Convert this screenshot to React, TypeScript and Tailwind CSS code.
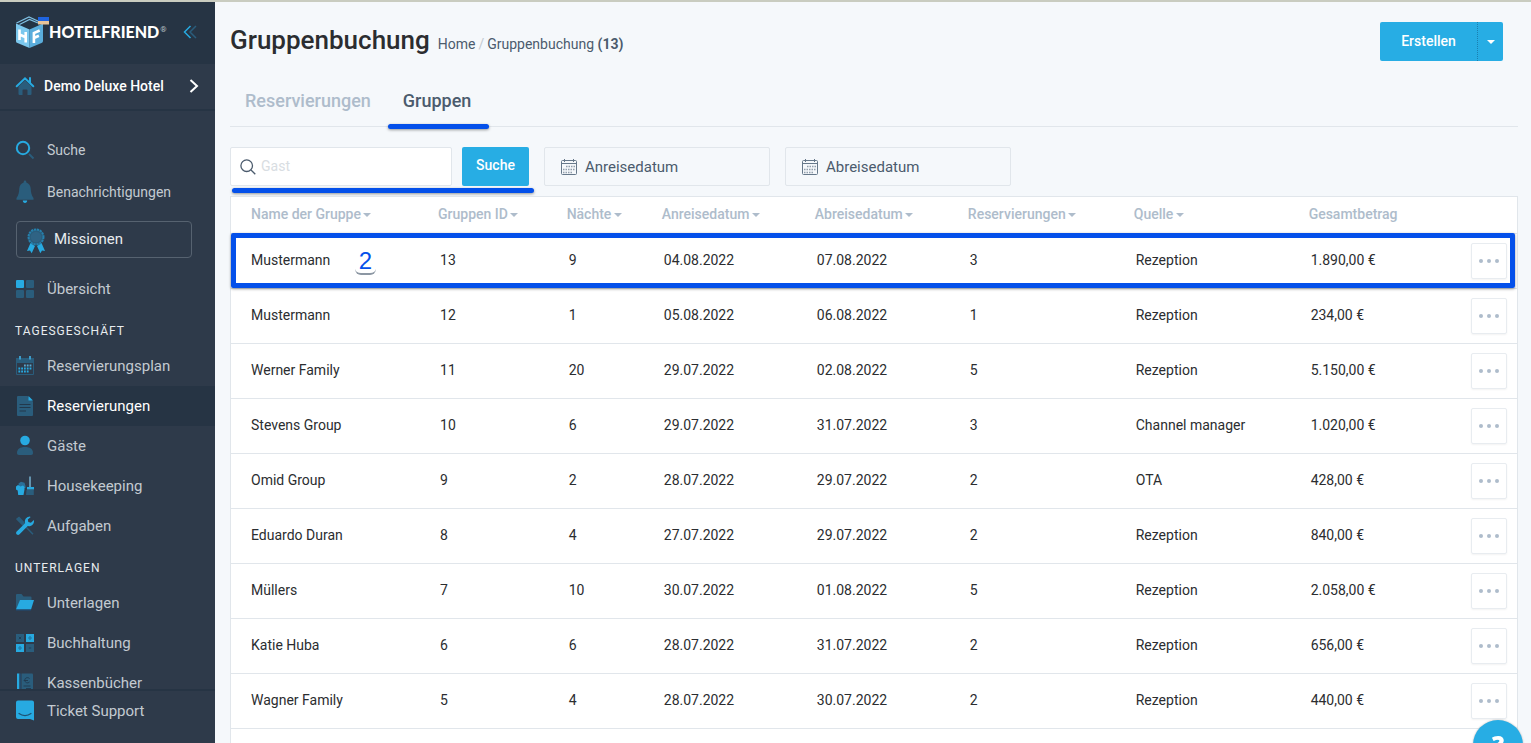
import React, { useState } from 'react'

interface IGroup {
  id: number
  name: string
  nights: number
  arrival: string
  departure: string
  reservations: number
  source: string
  total: string
}

const groups: IGroup[] = [
  { id: 13, name: 'Mustermann', nights: 9, arrival: '04.08.2022', departure: '07.08.2022', reservations: 3, source: 'Rezeption', total: '1.890,00 €' },
  { id: 12, name: 'Mustermann', nights: 1, arrival: '05.08.2022', departure: '06.08.2022', reservations: 1, source: 'Rezeption', total: '234,00 €' },
  { id: 11, name: 'Werner Family', nights: 20, arrival: '29.07.2022', departure: '02.08.2022', reservations: 5, source: 'Rezeption', total: '5.150,00 €' },
  { id: 10, name: 'Stevens Group', nights: 6, arrival: '29.07.2022', departure: '31.07.2022', reservations: 3, source: 'Channel manager', total: '1.020,00 €' },
  { id: 9, name: 'Omid Group', nights: 2, arrival: '28.07.2022', departure: '29.07.2022', reservations: 2, source: 'OTA', total: '428,00 €' },
  { id: 8, name: 'Eduardo Duran', nights: 4, arrival: '27.07.2022', departure: '29.07.2022', reservations: 2, source: 'Rezeption', total: '840,00 €' },
  { id: 7, name: 'Müllers', nights: 10, arrival: '30.07.2022', departure: '01.08.2022', reservations: 5, source: 'Rezeption', total: '2.058,00 €' },
  { id: 6, name: 'Katie Huba', nights: 6, arrival: '28.07.2022', departure: '31.07.2022', reservations: 2, source: 'Rezeption', total: '656,00 €' },
  { id: 5, name: 'Wagner Family', nights: 4, arrival: '28.07.2022', departure: '30.07.2022', reservations: 2, source: 'Rezeption', total: '440,00 €' },
]

const columns = [
  { title: 'Name der Gruppe', width: 'w-[14.7%]', sortable: true },
  { title: 'Gruppen ID', width: 'w-[10%]', sortable: true },
  { title: 'Nächte', width: 'w-[7.4%]', sortable: true },
  { title: 'Anreisedatum', width: 'w-[11.9%]', sortable: true },
  { title: 'Abreisedatum', width: 'w-[11.9%]', sortable: true },
  { title: 'Reservierungen', width: 'w-[12.9%]', sortable: true },
  { title: 'Quelle', width: 'w-[13.6%]', sortable: true },
  { title: 'Gesamtbetrag', width: 'w-[12.4%]', sortable: false },
]

const LIGHT = '#27aae1'
const DARK = '#2a5d7c'

const Icon = ({ children }: { children: React.ReactNode }) => (
  <svg viewBox="0 0 18 18" className="h-[18px] w-[18px] shrink-0 overflow-visible" aria-hidden="true">
    {children}
  </svg>
)

const HouseIcon = () => (
  <Icon>
    <path d="M2.500 9.500 9 3.500l6.500 6V17a1 1 0 0 1-1 1h-3v-4.500a1 1 0 0 0-1-1h-3a1 1 0 0 0-1 1V18h-3a1 1 0 0 1-1-1z" fill={DARK} />
    <path d="M.7 9.300 9 1.300l8.300 8M14 1v4.500" fill="none" stroke={LIGHT} strokeWidth="2" strokeLinecap="round" />
  </Icon>
)

const SearchIcon = () => (
  <Icon>
    <path d="m13 13 4.500 4.500" stroke={DARK} strokeWidth="2" />
    <circle cx="7" cy="7" r="6.200" fill="none" stroke={LIGHT} strokeWidth="2" />
  </Icon>
)

const BellIcon = () => (
  <Icon>
    <path d="M9-2.500c.8 0 1.300.6 1.300 1.500v.5C13 .4 14.500 2.500 14.700 5.500c.2 4.500.8 6.500 2.800 9.500v1.700H.5V15c2-3 2.600-5 2.800-9.500C3.500 2.500 5 .4 7.700-.5V-1c0-.9.5-1.500 1.300-1.500z" fill={DARK} />
    <path d="M6.800 17.500h4.400c0 1.500-.9 2.500-2.200 2.500s-2.200-1-2.200-2.500z" fill={LIGHT} />
  </Icon>
)

const AwardIcon = () => (
  <Icon>
    <path d="M3.500 12 0 20l3-.5 1.700 2.700L8 15zM14.500 12 18 20l-3-.5-1.700 2.700L10 15z" fill={LIGHT} />
    <circle cx="9" cy="6" r="7.500" fill={DARK} />
    <circle cx="9" cy="6" r="7.500" fill="none" stroke="#2680ad" strokeWidth="2" strokeDasharray="2.300 .7" />
    <circle cx="9" cy="6" r="5.300" fill="#2f6384" />
  </Icon>
)

const TilesIcon = () => (
  <Icon>
    <rect width="8" height="8" rx="1" fill={LIGHT} />
    <rect x="10" width="8" height="8" rx="1" fill={DARK} />
    <rect y="10" width="8" height="8" rx="1" fill={DARK} />
    <rect x="10" y="10" width="8" height="8" rx="1" fill={DARK} />
  </Icon>
)

const PlanIcon = () => (
  <Icon>
    <path d="M0 1h18v5H0z" fill={DARK} />
    <path d="M.5 6v11.500h17V6" fill="none" stroke={DARK} />
    <path d="M4-1v3.500M14-1v3.500" stroke="#3d9cc9" strokeWidth="2" />
    <path d="M8 8.500h8" stroke="#58a9d0" strokeWidth="1.800" strokeDasharray="1.800 1" />
    <path d="M2.400 11.500H16M2.400 14.500h11" stroke={LIGHT} strokeWidth="1.800" strokeDasharray="1.800 1" />
  </Icon>
)

const DocumentIcon = () => (
  <Icon>
    <path d="M2-1h9.500L17 4.500V18a1 1 0 0 1-1 1H2a1 1 0 0 1-1-1V0a1 1 0 0 1 1-1z" fill={DARK} />
    <path d="M12.500-1 17 3.500h-4.500z" fill={LIGHT} />
    <path d="M3.500 7.500h11M3.500 10.500h11M3.500 14h6.500" stroke="#22384b" strokeWidth="1.200" />
  </Icon>
)

const GuestIcon = () => (
  <Icon>
    <circle cx="9" cy="3.500" r="4.800" fill={LIGHT} />
    <path d="M1 16c0-4 3-6 8-6s8 2 8 6c0 1.300-.7 2-2 2H3c-1.300 0-2-.7-2-2z" fill={DARK} />
  </Icon>
)

const HousekeepingIcon = () => (
  <Icon>
    <path d="M13-.5h2V10h-2z" fill="#6393ae" />
    <path d="M11 10h7v2.500h-7z" fill={LIGHT} />
    <path d="M10.500 13h7.300v5H10z" fill={DARK} />
    <path d="M2.500 6.500 5 4.700l3.500 1L9.500 9v2H3z" fill="#2a6f98" />
    <path d="M0 9.500 2 8l2.500 1.500L7 8.500l1.500 1.500v2.500L7.500 18H2.200l-.5-4.500L0 12.500z" fill={LIGHT} />
  </Icon>
)

const ToolsIcon = () => (
  <Icon>
    <path d="m1 2 2-1.500L9 7 7.500 8.700zM10.500 10.500l6.500 6.700" stroke={DARK} strokeWidth="1.500" fill={DARK} />
    <path d="M13.500-.5a5 5 0 0 0-4.400 6.700L.7 14.500c-1.800 2 .8 4.600 2.800 2.800L11.800 9a5 5 0 0 0 6.100-6l-3 2.700-2.600-.6-.5-2.500L14.700 0z" fill={LIGHT} />
  </Icon>
)

const FolderIcon = () => (
  <Icon>
    <path d="M0 1a1 1 0 0 1 1-1h4.500l2 2.500h7a1 1 0 0 1 1 1V8L0 15z" fill={DARK} />
    <path d="M4 6h14l-3 9.500H0z" fill={LIGHT} />
    <path d="M0 16h15" stroke="#1d4d78" />
  </Icon>
)

const CalcIcon = () => (
  <Icon>
    <rect width="8" height="8" fill={DARK} />
    <rect x="10" width="8" height="8" fill={LIGHT} />
    <rect y="10" width="8" height="8" fill={LIGHT} />
    <rect x="10" y="10" width="8" height="8" fill={DARK} />
    <path d="m2.800 2.800 2.400 2.400m0-2.400L2.800 5.200M12.800 14h2.400" stroke="#1f3f58" />
    <path d="M12 4h4M14 2v4M2 14h4M4 12v4" stroke="#2277a3" strokeWidth="1.200" />
  </Icon>
)

const BookIcon = () => (
  <Icon>
    <path d="M5.500-.5H16a1 1 0 0 1 1 1V18H5.500z" fill={DARK} />
    <path d="M1-.5h2.500V18H1z" fill={LIGHT} />
    <path d="M3.500-.5H5V18H3.500z" fill="#22486a" />
    <path d="M13.500 4.500c-2.300-2-5-.2-4.700 2s2.700 3.200 4.700 1.500M7.700 6.500H12M7.500 12h7M10 14.500h5" fill="none" stroke="#213c53" />
  </Icon>
)

const SupportIcon = () => (
  <Icon>
    <path d="M2-1.500h14a2 2 0 0 1 2 2V18.500l-4-1.500H2a2 2 0 0 1-2-2V.5a2 2 0 0 1 2-2z" fill={LIGHT} />
    <path d="M3 11.500c3.500 2.700 8.500 2.700 12 0" fill="none" stroke="#1d5273" strokeWidth="1.200" strokeLinecap="round" />
  </Icon>
)

const CalendarIcon = () => (
  <svg viewBox="0 0 16 16" className="h-4 w-4 shrink-0" fill="none" stroke="#66788a" aria-hidden="true">
    <rect x=".5" y="1.500" width="15" height="14" rx="1" />
    <path d="M.5 4.500h15M3.500 0v3M12.500 0v3" />
    <path d="M5 7.500h9M2 10.500h12M2 13.500h9" strokeWidth="1.500" strokeDasharray="1.500 1" strokeOpacity=".7" />
  </svg>
)

const Logo = () => (
  <svg viewBox="0 0 34 33" className="h-[33px] w-[34px] shrink-0" aria-hidden="true">
    <path d="M1 8.500 13 3l14 5.500L14 14z" fill="#233344" />
    <path d="M.5 7 13 1l11 5M3.500 8.500 13.500 3.500 22 7" fill="none" stroke="#7fbfe2" strokeWidth="1.300" />
    <path d="m0 7.500 13.500 6V32L1.500 27A2 2 0 0 1 0 25z" fill="#7cc8ee" />
    <path d="m27 7.500-13.500 6V32l12-5a2 2 0 0 0 1.500-2z" fill="#5aaddc" />
    <path d="M3.500 13.500V24M9.700 16v10.500M3.500 18.500l6.200 2.700" stroke="#fff" strokeWidth="2.600" fill="none" />
    <path d="M17.900 27V17l5.800-2.500M17.900 22l5-2.200" stroke="#fff" strokeWidth="2.600" fill="none" />
    <path d="M22 1h11v4H22z" fill="#1f64e0" />
    <path d="M22 5h11v3.500H22z" fill="#e8c49a" />
  </svg>
)

const Caret = () => (
  <span className="inline-block border-x-4 border-t-4 border-x-transparent border-t-current align-middle" />
)

interface MenuItemProps {
  label: string
  icon: React.ReactNode
  active?: boolean
  small?: boolean
}

const MenuItem = ({ label, icon, active, small }: MenuItemProps) => (
  <a
    href="#"
    className={`flex h-10 shrink-0 items-center gap-[13px] px-4 hover:text-white ${small ? 'text-sm' : 'text-[15px]'} ${active ? 'bg-[#263444] text-white' : 'text-[#c3cad1]'}`}
  >
    {icon}
    {label}
  </a>
)

const MenuTitle = ({ children }: { children: React.ReactNode }) => (
  <h2 className="flex h-[37px] shrink-0 items-center px-[15px] pt-1.5 text-xs tracking-[1px] text-[#e8ecef]">{children}</h2>
)

const Sidebar = () => (
  <aside className="flex w-[215px] shrink-0 flex-col bg-[#2e3a4a] text-[15px]">
    <div className="flex h-[62px] shrink-0 items-center bg-[#263444] pr-[18px] pb-0.5 pl-4">
      <Logo />
      <span className="-ml-px font-['Lato'] text-base font-black text-white">HOTELFRIEND</span>
      <span className="mb-1 ml-px text-[8px] text-[#b8c0c8]">®</span>
      <button className="ml-auto" aria-label="Menü einklappen">
        <svg viewBox="0 0 14 14" className="h-[14px] w-[14px]" fill="none" strokeWidth="1.500">
          <path d="M13 1 7 7l6 6" stroke={DARK} />
          <path d="M7.500 1 1.500 7l6 6" stroke={LIGHT} />
        </svg>
      </button>
    </div>
    <button className="flex h-[47px] shrink-0 items-center border-b-2 border-[#263444] px-4 pb-0.5 text-sm font-medium text-white">
      <HouseIcon />
      <span className="ml-[10px] flex-1 text-left">Demo Deluxe Hotel</span>
      <svg viewBox="0 0 10 14" className="h-[14px] w-[10px]" fill="none" stroke="#fff" strokeWidth="2">
        <path d="m1.500 1 6.500 6-6.500 6" />
      </svg>
    </button>
    <nav className="flex flex-1 flex-col overflow-hidden pt-[19px]">
      <MenuItem label="Suche" icon={<SearchIcon />} small />
      <div className="h-0.5 shrink-0" />
      <MenuItem label="Benachrichtigungen" icon={<BellIcon />} small />
      <a href="#" className="mt-[9px] mr-[23px] ml-4 flex h-[37px] shrink-0 items-center gap-[9px] rounded-sm border border-[#566270] pl-[10px] text-[#e8ecef]">
        <AwardIcon />
        Missionen
      </a>
      <div className="h-[11px] shrink-0" />
      <MenuItem label="Übersicht" icon={<TilesIcon />} />
      <MenuTitle>TAGESGESCHÄFT</MenuTitle>
      <MenuItem label="Reservierungsplan" icon={<PlanIcon />} />
      <MenuItem label="Reservierungen" icon={<DocumentIcon />} active />
      <MenuItem label="Gäste" icon={<GuestIcon />} />
      <MenuItem label="Housekeeping" icon={<HousekeepingIcon />} />
      <MenuItem label="Aufgaben" icon={<ToolsIcon />} />
      <MenuTitle>UNTERLAGEN</MenuTitle>
      <MenuItem label="Unterlagen" icon={<FolderIcon />} />
      <MenuItem label="Buchhaltung" icon={<CalcIcon />} />
      <MenuItem label="Kassenbücher" icon={<BookIcon />} />
    </nav>
    <div className="shrink-0 border-t-2 border-[#263444] pb-3">
      <MenuItem label="Ticket Support" icon={<SupportIcon />} />
    </div>
  </aside>
)

const DateField = ({ label }: { label: string }) => (
  <button className="flex h-[39px] w-[226px] items-center gap-2 rounded-xs border border-[#e1e6eb] px-4 text-[15px] text-[#4b5b6d]">
    <CalendarIcon />
    <span className="pt-0.5">{label}</span>
  </button>
)

const GroupTable = () => (
  <div className="relative mt-[10px] border border-[#e1e6eb] bg-white">
    <table className="w-full table-fixed text-left text-sm text-[#2b2d30]">
      <thead>
        <tr className="h-9 border-b border-[#e1e6eb] text-[#aebccb]">
          {columns.map((col, i) => (
            <th key={col.title} className={`${col.width} ${i === 0 ? 'pl-5' : 'pl-[18px]'} pb-0.5 font-medium whitespace-nowrap`}>
              {col.sortable ? (
                <button>
                  {col.title} <span className="-ml-px"><Caret /></span>
                </button>
              ) : col.title}
            </th>
          ))}
          <th aria-label="Aktionen" />
        </tr>
      </thead>
      <tbody>
        {groups.map(group => (
          <tr key={group.id} className="h-[55px] border-b border-[#e1e6eb]">
            <td className="pb-0.5 pl-5">{group.name}</td>
            <td className="pb-0.5 pl-5">{group.id}</td>
            <td className="pb-0.5 pl-5">{group.nights}</td>
            <td className="pb-0.5 pl-5">{group.arrival}</td>
            <td className="pb-0.5 pl-5">{group.departure}</td>
            <td className="pb-0.5 pl-5">{group.reservations}</td>
            <td className="pb-0.5 pl-5">{group.source}</td>
            <td className="pb-0.5 pl-5">{group.total}</td>
            <td className="pr-[10px]">
              <button
                aria-label={`Aktionen ${group.name}`}
                className="ml-auto flex h-9 w-9 items-center justify-center gap-1 rounded-xs border border-[#e8ecf0] shadow-xs"
              >
                <i className="h-1 w-1 rounded-full bg-[#aebccb]" />
                <i className="h-1 w-1 rounded-full bg-[#aebccb]" />
                <i className="h-1 w-1 rounded-full bg-[#aebccb]" />
              </button>
            </td>
          </tr>
        ))}
        <tr className="h-[55px]"><td colSpan={9} /></tr>
      </tbody>
    </table>

    {/* highlighted first group */}
    <div className="pointer-events-none absolute top-9 right-0.5 left-0 h-[55px] rounded-xs border-[5px] border-[#0450ea] shadow-[0_1px_3px_rgba(0,0,0,0.4)]" />
    <div className="pointer-events-none absolute top-[53px] left-[124px] flex h-[25px] w-[21px] items-center justify-center rounded-md border-b-2 border-[#8c97a3] pb-0.5 font-['Liberation_Sans'] text-2xl text-[#0450ea]">
      2
    </div>
  </div>
)

const App = () => {
  const [guest, setGuest] = useState('')

  return (
    <div className="flex h-screen overflow-hidden border-t-2 border-[#c9ccc0] bg-[#f5f8fb] font-['Roboto',sans-serif]">
      <Sidebar />
      <main className="min-w-0 flex-1 overflow-hidden pr-[13px] pl-[15px]">
        <header className="flex items-start justify-between pt-5 pr-[15px]">
          <div className="flex items-baseline">
            <h1 className="text-[26px] leading-9 font-medium text-[#2b2d30]">Gruppenbuchung</h1>
            <div className="ml-2 text-sm text-[#4b5b6d]">
              <a href="#">Home</a>
              <span className="mx-[3px] text-[#c3cad1]">/</span>
              Gruppenbuchung <b className="font-bold">(13)</b>
            </div>
          </div>
          <div className="flex h-[39px] overflow-hidden rounded-xs bg-[#27ade4] text-sm font-medium text-white">
            <button className="w-[97px] pb-0.5">Erstellen</button>
            <button className="w-[26px] border-l border-dotted border-[#1b7fb0] pb-0.5" aria-label="Weitere Optionen"><Caret /></button>
          </div>
        </header>

        <div className="mt-[14px] flex h-[52px] border-b border-[#e1e6eb] text-lg font-medium">
          <a href="#" className="px-[15px] pt-3 text-[#aebccb]">Reservierungen</a>
          <a href="#" className="relative ml-0.5 px-[15px] pt-3 text-[#4b5b6d]">
            Gruppen
            <span className="absolute -right-[3px] -bottom-[3px] left-0 h-[5px] rounded-full bg-[#0450ea] shadow-[0_1px_3px_rgba(0,0,0,0.4)]" />
          </a>
        </div>

        <div className="mt-5 flex">
          <form className="relative flex gap-[10px]" onSubmit={e => e.preventDefault()}>
            <label className="flex h-[39px] w-[222px] items-center gap-[5px] rounded-xs border border-[#e1e6eb] bg-white px-[9px]">
              <svg viewBox="0 0 16 16" className="h-4 w-4 shrink-0" fill="none" stroke="#4b5b6d" strokeWidth="1.300" aria-hidden="true">
                <circle cx="6.700" cy="6.700" r="5.800" />
                <path d="m11 11 4.300 4.300" />
              </svg>
              <input
                value={guest}
                onChange={e => setGuest(e.target.value)}
                placeholder="Gast"
                aria-label="Gast"
                className="min-w-0 flex-1 pb-0.5 text-sm outline-none placeholder:text-[#d8dde2]"
              />
            </label>
            <button className="h-[39px] w-[67px] rounded-xs bg-[#27ade4] pb-1 text-sm font-medium text-white">Suche</button>
            <span className="absolute -right-[5px] -bottom-[7px] left-0.5 h-[5px] rounded-full bg-[#0450ea] shadow-[0_1px_3px_rgba(0,0,0,0.4)]" />
          </form>
          <div className="ml-[15px] flex gap-[15px]">
            <DateField label="Anreisedatum" />
            <DateField label="Abreisedatum" />
          </div>
        </div>

        <GroupTable />
      </main>

      <button className="fixed right-2 -bottom-[27px] h-[50px] w-[50px] rounded-full bg-[#27ade4] font-['Open_Sans'] text-2xl font-extrabold text-white shadow-[0_0_2px_rgba(0,0,0,0.3)]">
        ?
      </button>
    </div>
  )
}

export default App
